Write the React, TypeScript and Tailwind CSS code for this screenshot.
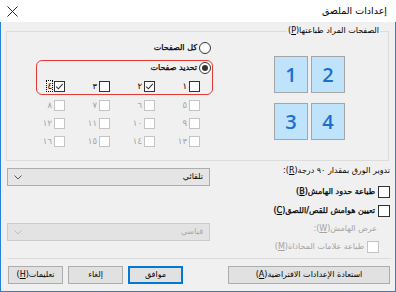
import React from "react";

const font = { fontFamily: '"DejaVu Sans", "Liberation Sans", sans-serif' };

function Box({ checked = false, disabled = false, size = 11 }: { checked?: boolean; disabled?: boolean; size?: number }) {
    return (
        <span
            className={`flex shrink-0 items-center justify-center border bg-white ${disabled ? "border-[#c4c4c4]" : "border-[#333333]"}`}
            style={{ width: size, height: size }}
        >
            {checked && (
                <svg width="9" height="9" viewBox="0 0 9 9">
                    <polyline points="1.2,4.6 3.4,6.8 7.8,1.8" fill="none" stroke="#333" strokeWidth="1.1" />
                </svg>
            )}
        </span>
    );
}

function Radio({ on = false }: { on?: boolean }) {
    return (
        <span className="flex h-[12px] w-[12px] shrink-0 items-center justify-center rounded-full border border-[#333333] bg-white">
            {on && <span className="h-[6px] w-[6px] rounded-full bg-[#333333]" />}
        </span>
    );
}

const pages = [
    [{ n: "١" }, { n: "٢", c: true }, { n: "٣" }, { n: "٤", c: true, focus: true }],
    [{ n: "٥" }, { n: "٦" }, { n: "٧" }, { n: "٨" }],
    [{ n: "٩" }, { n: "١٠" }, { n: "١١" }, { n: "١٢" }],
    [{ n: "١٣" }, { n: "١٤" }, { n: "١٥" }, { n: "١٦" }],
];

function PageRow({ row, disabled, className }: { row: { n: string; c?: boolean; focus?: boolean }[]; disabled: boolean; className: string }) {
    return (
        <div dir="rtl" className={`grid grid-cols-[45px_45px_45px_45px] pr-[12px] ${className}`}>
            {row.map((p) => (
                <div key={p.n} className="flex h-[12px] items-center gap-[2px]">
                    <Box checked={p.c} disabled={disabled} />
                    <span
                        className={`text-[8.5px] leading-[10px] ${disabled ? "text-[#a3a3a3]" : "text-black"} ${p.focus ? "outline outline-1 outline-dotted outline-black" : ""}`}
                    >
                        {p.n}
                    </span>
                </div>
            ))}
        </div>
    );
}

function Tile({ n }: { n: string }) {
    return (
        <div className="flex h-[37px] w-[34px] items-center justify-center border border-[#a5a5a5] bg-[#bfe3fb]">
            <span className="text-[20px] font-semibold text-[#1c6fcf]" style={{ fontFamily: '"Open Sans", sans-serif' }}>
                {n}
            </span>
        </div>
    );
}

function Button({ children, primary = false, className = "" }: { children: React.ReactNode; primary?: boolean; className?: string }) {
    return (
        <div
            dir="rtl"
            className={`flex h-[18px] items-center justify-center bg-[#e1e1e1] text-[8px] text-black ${primary ? "border-2 border-[#0078d7]" : "border border-[#adadad]"} ${className}`}
        >
            {children}
        </div>
    );
}

function Select({ label, disabled = false, className = "" }: { label: string; disabled?: boolean; className?: string }) {
    return (
        <div
            className={`flex h-[18px] items-center justify-between border px-[6px] ${disabled ? "border-[#cccccc] bg-[#e3e3e3] text-[#a8a8a8]" : "border-[#adadad] bg-[#e5e5e5] text-black"} ${className}`}
        >
            <svg width="8" height="5" viewBox="0 0 8 5">
                <polyline points="0.5,0.5 4,4 7.5,0.5" fill="none" stroke={disabled ? "#bdbdbd" : "#555"} strokeWidth="1" />
            </svg>
            <span dir="rtl" className="text-[8px]">{label}</span>
        </div>
    );
}

export default function App() {
    return (
        <div className="h-[292px] w-[396px] overflow-hidden bg-white" style={font}>
            {/* title bar */}
            <div className="flex h-[22px] items-center justify-between pl-[7px] pr-[9px]">
                <svg width="11" height="11" viewBox="0 0 11 11">
                    <path d="M0.5 0.5 L10.5 10.5 M10.5 0.5 L0.5 10.5" stroke="#222" strokeWidth="1" />
                </svg>
                <span dir="rtl" className="text-[9.5px] text-black">إعدادات الملصق</span>
            </div>

            {/* body */}
            <div className="flex h-[270px] flex-col border-x border-b border-[#2a82d6] bg-[#f0f0f0]">
                {/* group box */}
                <div className="relative ml-[5px] mt-[9px] h-[130px] w-[383px] border border-[#dcdcdc]">
                    <span dir="rtl" className="absolute -top-[7px] right-[8px] bg-[#f0f0f0] px-[1px] text-[8px] leading-[12px] text-black">
                        الصفحات المراد طباعتها(<u>P</u>)
                    </span>

                    <div className="flex">
                        <div className="w-[205px] pt-[9px]">
                            <div dir="rtl" className="flex h-[14px] items-center gap-[2px] pr-[1px]">
                                <Radio />
                                <span className="text-[8px] text-black [-webkit-text-stroke:0.25px_black]">كل الصفحات</span>
                            </div>
                            <div dir="rtl" className="mt-[6px] flex h-[14px] items-center gap-[2px] pr-[1px]">
                                <Radio on />
                                <span className="text-[8px] text-black [-webkit-text-stroke:0.25px_black]">تحديد صفحات</span>
                            </div>
                            <PageRow row={pages[0]} disabled={false} className="mt-[5px]" />
                            <PageRow row={pages[1]} disabled className="mt-[7px]" />
                            <PageRow row={pages[2]} disabled className="mt-[6px]" />
                            <PageRow row={pages[3]} disabled className="mt-[6px]" />
                        </div>

                        <div className="ml-[62px] mt-[24px] grid grid-cols-[34px_34px] gap-[3px]">
                            <Tile n="1" />
                            <Tile n="2" />
                            <Tile n="3" />
                            <Tile n="4" />
                        </div>
                    </div>

                    {/* red highlight annotation */}
                    <div className="pointer-events-none absolute left-[29px] top-[28px] h-[35px] w-[177px] rounded-[6px] border-[1.5px] border-[#e53935]" />
                </div>

                {/* options */}
                <div className="flex">
                    <div className="ml-[6px] w-[203px]">
                        <Select label="تلقائي" className="mt-[7px]" />
                        <Select label="قياسي" disabled className="mt-[37px]" />
                    </div>
                    <div dir="rtl" className="ml-auto mr-[5px] flex w-[178px] flex-col text-[8px]">
                        <div className="mt-[4px] h-[12px] leading-[12px] text-black">
                            تدوير الورق بمقدار ٩٠ درجة(<u>R</u>):
                        </div>
                        <div className="mt-[8px] flex h-[14px] items-center gap-[3px]">
                            <Box size={12} />
                            <span className="text-black [-webkit-text-stroke:0.25px_black]">طباعة حدود الهامش(<u>B</u>)</span>
                        </div>
                        <div className="mt-[5px] flex h-[14px] items-center gap-[3px]">
                            <Box size={12} />
                            <span className="text-black [-webkit-text-stroke:0.25px_black]">تعيين هوامش للقص/اللصق(<u>C</u>)</span>
                        </div>
                        <div className="mr-[13px] mt-[5px] h-[12px] leading-[12px] text-[#a3a3a3]">
                            عرض الهامش(<u>W</u>):
                        </div>
                        <div className="mr-[11px] mt-[6px] flex h-[12px] items-center gap-[3px]">
                            <Box size={12} disabled />
                            <span className="text-[#a3a3a3]">طباعة علامات المحاذاة(<u>M</u>)</span>
                        </div>
                    </div>
                </div>

                <div className="ml-[6px] mr-[4px] mt-[5px] h-px bg-[#dcdcdc]" />

                {/* buttons */}
                <div className="ml-[7px] mr-[5px] mt-[7px] flex">
                    <div className="flex gap-[5px]">
                        <Button className="w-[55px]">تعليمات(<u>H</u>)</Button>
                        <Button className="w-[55px]">إلغاء</Button>
                        <Button className="w-[55px]" primary>موافق</Button>
                    </div>
                    <Button className="ml-auto w-[162px]">استعادة الإعدادات الافتراضية(<u>A</u>)</Button>
                </div>
            </div>
        </div>
    );
}
